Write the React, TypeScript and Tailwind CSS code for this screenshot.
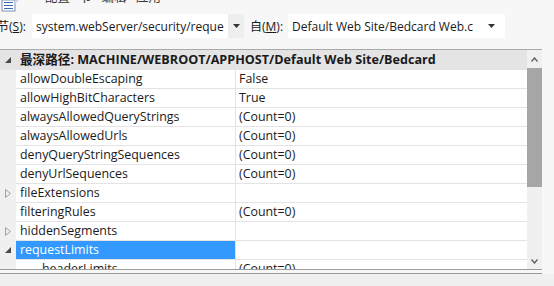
import React from "react";

type Row = {
  name: string;
  value?: string;
  expander?: "open" | "closed";
  selected?: boolean;
  indent?: boolean;
};

const rows: Row[] = [
  { name: "allowDoubleEscaping", value: "False" },
  { name: "allowHighBitCharacters", value: "True" },
  { name: "alwaysAllowedQueryStrings", value: "(Count=0)" },
  { name: "alwaysAllowedUrls", value: "(Count=0)" },
  { name: "denyQueryStringSequences", value: "(Count=0)" },
  { name: "denyUrlSequences", value: "(Count=0)" },
  { name: "fileExtensions", expander: "closed" },
  { name: "filteringRules", value: "(Count=0)" },
  { name: "hiddenSegments", expander: "closed" },
  { name: "requestLimits", expander: "open", selected: true },
  { name: "headerLimits", value: "(Count=0)", indent: true }
];

const OpenArrow = () => (
  <svg width="7" height="7" viewBox="0 0 7 7">
    <polygon points="6,0 6,6 0,6" fill="#4a4a4a" />
  </svg>
);

const ClosedArrow = () => (
  <svg width="6" height="9" viewBox="0 0 6 9">
    <polygon points="0.5,0.5 5.5,4.5 0.5,8.5" fill="none" stroke="#a0a0a0" strokeWidth="1" />
  </svg>
);

const Caret = () => (
  <svg width="7" height="4" viewBox="0 0 7 4">
    <polygon points="0,0 7,0 3.5,4" fill="#333" />
  </svg>
);

const GridRow = ({ row }: { row: Row }) => (
  <div className="flex h-[19px] shrink-0">
    <div className="flex w-[16px] shrink-0 items-center justify-center bg-[#f0f0f0]">
      {row.expander === "open" && <OpenArrow />}
      {row.expander === "closed" && <ClosedArrow />}
    </div>
    <div
      className={`flex w-[220px] shrink-0 items-center whitespace-nowrap border-b border-r border-[#e3e3e3] pt-[1px] ${
        row.indent ? "pl-[26px]" : "pl-[4px]"
      } ${row.selected ? "bg-[#3399ff] text-white" : "bg-white"}`}
    >
      {row.name}
    </div>
    <div className="flex flex-1 items-center border-b border-[#e3e3e3] bg-white pl-[3px] pt-[1px]">
      {row.value}
    </div>
  </div>
);

export default function App() {
  return (
    <div
      className="flex h-[286px] w-[554px] flex-col overflow-hidden bg-[#f7f7f7] text-[12.4px] text-[#1a1a1a]"
      style={{ fontFamily: '"Open Sans", "Noto Sans CJK SC", sans-serif' }}
    >
      {/* cut-off title strip */}
      <div className="flex h-[12px] shrink-0 items-end overflow-hidden">
        <svg width="18" height="12" viewBox="0 0 18 12" className="ml-[1px]">
          <rect x="1" y="0" width="13" height="11" fill="#ffffff" stroke="#7a8fb0" />
          <line x1="3" y1="2.5" x2="12" y2="2.5" stroke="#3b6bb5" />
          <line x1="3" y1="5.5" x2="12" y2="5.5" stroke="#3b6bb5" />
          <line x1="3" y1="8.5" x2="12" y2="8.5" stroke="#3b6bb5" />
          <polygon points="14,0 18,0 14,4" fill="#c9d6ea" />
        </svg>
        <div className="mb-[8px] ml-[26px] leading-[12px] text-[#333]">
          配置 · 节 · 编辑 · 应用
        </div>
      </div>

      {/* section / from row */}
      <div className="mt-[2px] flex h-[24px] shrink-0 items-center text-[12px]">
        <span className="-ml-[3px] w-[35px] pt-[1px]">
          节(<span className="underline">S</span>):
        </span>
        <div className="flex h-[24px] w-[212px] items-center bg-white">
          <span className="w-[196px] overflow-hidden whitespace-nowrap pl-[4px] pt-[1px]">
            system.webServer/security/reque
          </span>
          <div className="flex h-full w-[16px] items-center justify-center bg-[#eeeeee]">
            <Caret />
          </div>
        </div>
        <span className="ml-[6px] w-[38px] pt-[1px]">
          自(<span className="underline">M</span>):
        </span>
        <div className="flex h-[24px] w-[217px] items-center bg-white">
          <span className="w-[200px] overflow-hidden whitespace-nowrap pl-[4px] pt-[1px]">
            Default Web Site/Bedcard Web.c
          </span>
          <Caret />
        </div>
      </div>

      {/* property grid */}
      <div className="mt-[11px] flex h-[225px] w-[542px] shrink-0 flex-col border-t border-[#a9a9a9]">
        <div className="flex h-[219px] shrink-0">
          <div className="flex w-[527px] flex-col overflow-hidden">
            <div className="flex h-[20px] shrink-0 items-center bg-[#e4e4e4] pt-[1px] text-[12.6px] font-bold">
              <div className="flex w-[16px] justify-center">
                <OpenArrow />
              </div>
              <span className="whitespace-nowrap pl-[4px]">
                最深路径: MACHINE/WEBROOT/APPHOST/Default Web Site/Bedcard
              </span>
            </div>
            {rows.map((row) => (
              <GridRow key={row.name} row={row} />
            ))}
          </div>
          <div className="flex w-[15px] flex-col bg-[#f0f0f0]">
            <div className="flex h-[18px] items-center justify-center">
              <svg width="7" height="5" viewBox="0 0 7 5">
                <polyline points="0.5,4.5 3.5,1 6.5,4.5" fill="none" stroke="#606060" strokeWidth="1.4" />
              </svg>
            </div>
            <div className="h-[119px] bg-[#a6a6a6]" />
            <div className="flex flex-1 items-end justify-center pb-[5px]">
              <svg width="7" height="5" viewBox="0 0 7 5">
                <polyline points="0.5,0.5 3.5,4 6.5,0.5" fill="none" stroke="#606060" strokeWidth="1.4" />
              </svg>
            </div>
          </div>
        </div>
        <div className="h-[5px] shrink-0 border-b border-t border-[#9c9c9c] bg-[#f7f7f7]" />
      </div>
      <div className="flex-1 bg-[#f0f0f0]" />
    </div>
  );
}
